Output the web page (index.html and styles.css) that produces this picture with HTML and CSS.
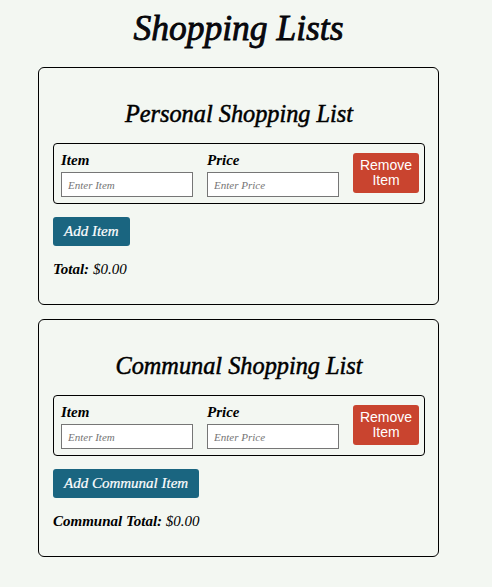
FILE: index.html
```html
<!DOCTYPE html>
<html>
<head>
<meta charset="utf-8">
<link rel="stylesheet" href="styles.css">
</head>
<body>
<main class="page">
  <h1 class="title">Shopping Lists</h1>
  <section class="card">
    <h2 class="card-title">Personal Shopping List</h2>
    <div class="item-row">
      <div class="field">
        <label class="field-label">Item</label>
        <input class="field-input" type="text" placeholder="Enter Item">
      </div>
      <div class="field">
        <label class="field-label">Price</label>
        <input class="field-input" type="text" placeholder="Enter Price">
      </div>
      <button class="remove-btn">Remove Item</button>
    </div>
    <button class="add-btn">Add Item</button>
    <p class="total"><strong>Total:</strong> $0.00</p>
  </section>
  <section class="card">
    <h2 class="card-title">Communal Shopping List</h2>
    <div class="item-row">
      <div class="field">
        <label class="field-label">Item</label>
        <input class="field-input" type="text" placeholder="Enter Item">
      </div>
      <div class="field">
        <label class="field-label">Price</label>
        <input class="field-input" type="text" placeholder="Enter Price">
      </div>
      <button class="remove-btn">Remove Item</button>
    </div>
    <button class="add-btn">Add Communal Item</button>
    <p class="total"><strong>Communal Total:</strong> $0.00</p>
  </section>
</main>
</body>
</html>
```
FILE: styles.css
```css
html, body {
  margin: 0;
  padding: 0;
  background: #f3f7f2;
}
body {
  font-family: "Liberation Serif", "Times New Roman", serif;
  font-style: italic;
  color: #000;
}
.page {
  width: 477px;
  display: flex;
  flex-direction: column;
  align-items: center;
  padding-top: 8px;
}
.title {
  margin: 0 0 19px;
  font-size: 35.5px;
  line-height: 40px;
  font-weight: normal;
  -webkit-text-stroke: 0.8px #000;
  color: #0a0a14;
}
.card {
  box-sizing: border-box;
  width: 401px;
  border: 1px solid #000;
  border-radius: 6px;
  padding: 0 13px 14px 14px;
  margin-bottom: 14px;
}
.card-title {
  margin: 31px 0 14px;
  text-align: center;
  font-size: 24.3px;
  line-height: 30px;
  font-weight: normal;
  -webkit-text-stroke: 0.5px #000;
}
.item-row {
  display: flex;
  align-items: flex-start;
  gap: 14px;
  border: 1px solid #000;
  border-radius: 4px;
  padding: 6px 5px 6px 7px;
}
.field {
  display: flex;
  flex-direction: column;
  width: 132px;
}
.field-label {
  font-weight: bold;
  font-size: 15px;
  line-height: 20px;
  margin-bottom: 2px;
}
.field-input {
  box-sizing: border-box;
  width: 132px;
  height: 25px;
  border: 1px solid #767676;
  background: #fff;
  padding: 0 6px;
  font-family: inherit;
  font-style: italic;
  font-size: 11px;
}
.field-input::placeholder {
  color: #757575;
}
.remove-btn {
  margin-left: auto;
  margin-top: 3px;
  width: 66px;
  height: 40px;
  border: none;
  border-radius: 3px;
  background: #c9442f;
  color: #fff;
  font-family: "Liberation Sans", Arial, sans-serif;
  font-style: normal;
  font-size: 14px;
  line-height: 15px;
  padding: 0 4px;
}
.add-btn {
  display: block;
  margin-top: 13px;
  height: 29px;
  border: none;
  border-radius: 3px;
  background: #1a6580;
  color: #fff;
  font-family: inherit;
  font-style: italic;
  font-size: 15px;
  padding: 0 11px;
  -webkit-text-stroke: 0.2px #fff;
}
.total {
  margin: 14px 0 0;
  font-size: 15px;
  line-height: 18px;
  min-height: 30px;
}
.total strong {
  font-weight: bold;
}
```
